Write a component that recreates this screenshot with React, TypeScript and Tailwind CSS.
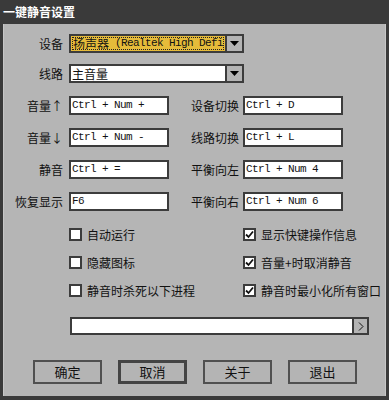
const cjk = { fontFamily: '"Noto Sans CJK SC", "Noto Sans", sans-serif' };
const mono = { fontFamily: '"Liberation Mono", "Noto Sans CJK SC", monospace' };

function Field({ value, w }: { value: string; w: string }) {
  return (
    <div
      className={`${w} h-[19px] border-2 border-[#3c3c3c] bg-white flex items-center pl-[1px] overflow-hidden whitespace-nowrap text-[11px] tracking-[-0.6px] text-[#111]`}
      style={mono}
    >
      {value}
    </div>
  );
}

function DropButton() {
  return (
    <div className="w-[17px] h-full border-l-2 border-[#3c3c3c] bg-[#b4b4b4] flex items-center justify-center">
      <svg width="9" height="5" viewBox="0 0 9 5">
        <polygon points="0,0 9,0 4.5,5" fill="#000" />
      </svg>
    </div>
  );
}

function Combo({ children, selected }: { children: React.ReactNode; selected?: boolean }) {
  return (
    <div className="w-[175px] h-[19px] border-2 border-[#3c3c3c] flex">
      <div className={`flex-1 overflow-hidden ${selected ? "bg-[#e6bb3a] p-[1px]" : "bg-white"}`}>
        <div
          className={`h-full flex items-center whitespace-nowrap overflow-hidden text-[#111] ${
            selected ? "border border-dotted border-[#222]" : "pl-[1px]"
          }`}
        >
          {children}
        </div>
      </div>
      <DropButton />
    </div>
  );
}

function Label({ text, w = "w-[59px]" }: { text: string; w?: string }) {
  return (
    <div className={`${w} text-right text-[12px] leading-none text-[#111]`} style={cjk}>
      {text}
    </div>
  );
}

function Check({ label, checked }: { label: string; checked?: boolean }) {
  return (
    <div className="flex items-center h-[13px]">
      <div className="w-[13px] h-[13px] border-2 border-[#3c3c3c] bg-white flex items-center justify-center">
        {checked && (
          <svg width="9" height="9" viewBox="0 0 9 9">
            <path d="M1 4.5 L3.5 7 L8 1.5" stroke="#111" strokeWidth="1.8" fill="none" />
          </svg>
        )}
      </div>
      <span className="ml-[5px] text-[12px] leading-none text-[#111]" style={cjk}>
        {label}
      </span>
    </div>
  );
}

function Btn({ text, def }: { text: string; def?: boolean }) {
  return (
    <div
      className={`w-[69px] h-[24px] flex items-center justify-center text-[13px] text-[#111] bg-[#b4b4b4] ${
        def ? "border-[3px] border-[#444]" : "border-2 border-[#505050]"
      }`}
      style={cjk}
    >
      {text}
    </div>
  );
}

const hotkeys = [
  { l: "音量↑", v: "Ctrl + Num +", rl: "设备切换", rv: "Ctrl + D" },
  { l: "音量↓", v: "Ctrl + Num -", rl: "线路切换", rv: "Ctrl + L" },
  { l: "静音", v: "Ctrl + =", rl: "平衡向左", rv: "Ctrl + Num 4" },
  { l: "恢复显示", v: "F6", rl: "平衡向右", rv: "Ctrl + Num 6" },
];

export default function App() {
  return (
    <div className="w-[389px] h-[400px] bg-[#3a3a3a] flex flex-col">
      <div className="h-[24px] flex items-center pl-[3px] text-white text-[12px] font-bold" style={cjk}>
        一键静音设置
      </div>
      <div className="mx-[3px] h-[372px] bg-[#b5b5b5] border-l border-r border-[#c6c6c6] flex flex-col">
        <div className="mt-[10px] flex items-center">
          <Label text="设备" />
          <div className="ml-[6px]">
            <Combo selected>
              <span className="text-[12px] leading-none" style={cjk}>扬声器</span>
              <span className="text-[11px] tracking-[-0.6px] ml-[6px]" style={mono}>
                (Realtek High Definition Audio)
              </span>
            </Combo>
          </div>
        </div>
        <div className="mt-[11px] flex items-center">
          <Label text="线路" />
          <div className="ml-[6px]">
            <Combo>
              <span className="text-[12px] leading-none" style={cjk}>主音量</span>
            </Combo>
          </div>
        </div>
        <div className="mt-[13px] flex flex-col gap-[13px]">
          {hotkeys.map((h) => (
            <div key={h.l} className="flex items-center">
              <Label text={h.l} />
              <div className="ml-[6px]">
                <Field value={h.v} w="w-[100px]" />
              </div>
              <Label text={h.rl} w="w-[70px]" />
              <div className="ml-[4px]">
                <Field value={h.rv} w="w-[100px]" />
              </div>
            </div>
          ))}
        </div>
        <div className="mt-[17px] flex flex-col gap-[15px] pl-[65px]">
          <div className="flex">
            <div className="w-[174px]">
              <Check label="自动运行" />
            </div>
            <Check label="显示快键操作信息" checked />
          </div>
          <div className="flex">
            <div className="w-[174px]">
              <Check label="隐藏图标" />
            </div>
            <Check label="音量+时取消静音" checked />
          </div>
          <div className="flex">
            <div className="w-[174px]">
              <Check label="静音时杀死以下进程" />
            </div>
            <Check label="静音时最小化所有窗口" checked />
          </div>
        </div>
        <div className="mt-[20px] ml-[66px] flex">
          <div className="w-[284px] h-[18px] border-2 border-[#3c3c3c] bg-white" />
          <div className="w-[15px] h-[18px] border-2 border-l-0 border-[#3c3c3c] bg-[#b4b4b4] flex items-center justify-center">
            <svg width="6" height="9" viewBox="0 0 6 9">
              <path d="M1 0.5 L5 4.5 L1 8.5" stroke="#111" strokeWidth="1" fill="none" />
            </svg>
          </div>
        </div>
        <div className="mt-[25px] ml-[29px] flex gap-[16px]">
          <Btn text="确定" />
          <Btn text="取消" def />
          <Btn text="关于" />
          <Btn text="退出" />
        </div>
      </div>
    </div>
  );
}
